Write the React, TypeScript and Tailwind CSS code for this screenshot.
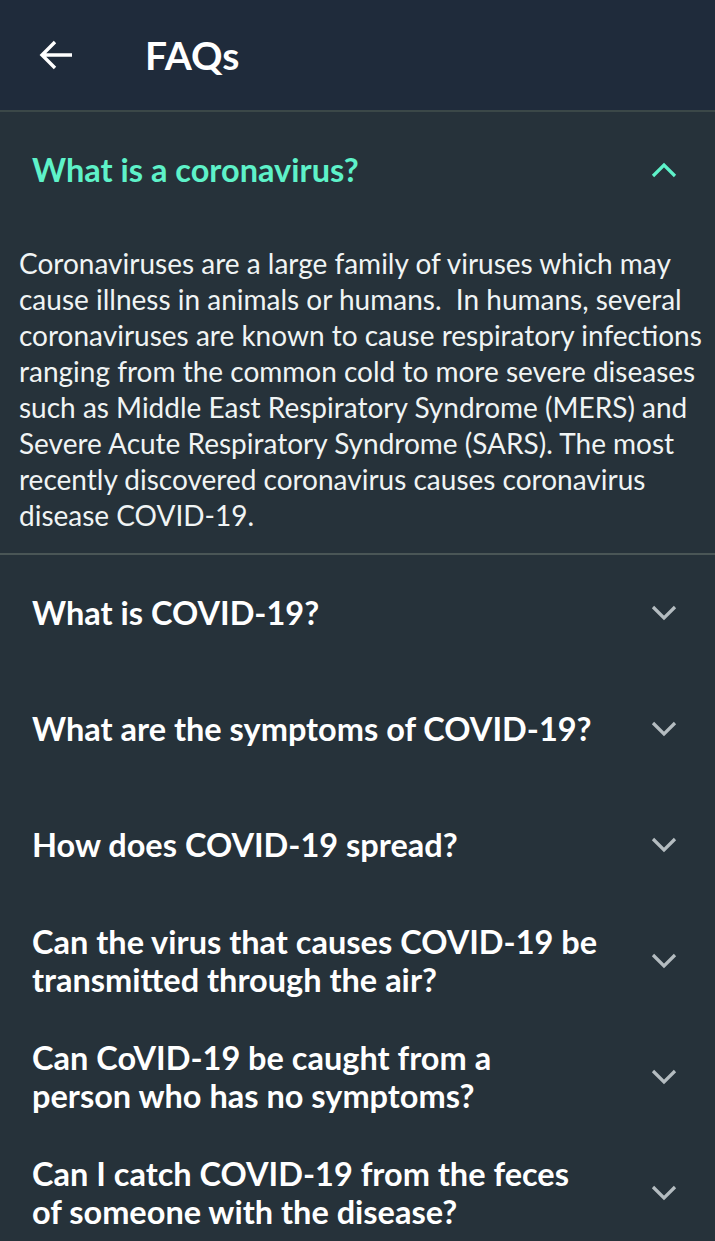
import { Fragment, useState } from "react";

type Faq = {
  question: string[];
  answer?: string[];
};

const faqs: Faq[] = [
  {
    question: ["What is a coronavirus?"],
    answer: [
      "Coronaviruses are a large family of viruses which may",
      "cause illness in animals or humans.\u00a0 In humans, several",
      "coronaviruses are known to cause respiratory infections",
      "ranging from the common cold to more severe diseases",
      "such as Middle East Respiratory Syndrome (MERS) and",
      "Severe Acute Respiratory Syndrome (SARS). The most",
      "recently discovered coronavirus causes coronavirus",
      "disease COVID-19.",
    ],
  },
  { question: ["What is COVID-19?"] },
  { question: ["What are the symptoms of COVID-19?"] },
  { question: ["How does COVID-19 spread?"] },
  { question: ["Can the virus that causes COVID-19 be", "transmitted through the air?"] },
  { question: ["Can CoVID-19 be caught from a", "person who has no symptoms?"] },
  { question: ["Can I catch COVID-19 from the feces", "of someone with the disease?"] },
];

const Chevron = ({ up }: { up: boolean }) => (
  <svg
    width="26"
    height="16"
    viewBox="0 0 26 16"
    fill="none"
    className={`shrink-0 ${up ? "text-[#5ef2c9]" : "text-[#b4bcc0]"}`}
  >
    {up ? (
      <path d="M2 14 L13 3 L24 14" stroke="currentColor" strokeWidth="3.2" />
    ) : (
      <path d="M2 2 L13 13 L24 2" stroke="currentColor" strokeWidth="3.2" />
    )}
  </svg>
);

const Lines = ({ lines }: { lines: string[] }) => (
  <>
    {lines.map((line, i) => (
      <Fragment key={line}>
        {i > 0 && <br />}
        {line}
      </Fragment>
    ))}
  </>
);

const App = () => {
  const [open, setOpen] = useState(0);

  return (
    <div className="min-h-[1241px] bg-[#26323a] font-['Lato',sans-serif]">
      <header className="h-[112px] bg-[#1f2b3b] flex items-center border-b-2 border-[#3b4848]">
        <button className="ml-[38px] mr-[71px] text-white">
          <svg width="36" height="32" viewBox="0 0 36 32" fill="none">
            <path d="M34 16 H4 M17 3 L4 16 L17 29" stroke="currentColor" strokeWidth="3.4" />
          </svg>
        </button>
        <h1 className="text-white text-[39px] font-bold">FAQs</h1>
      </header>

      {faqs.map((faq, i) => {
        const isOpen = open === i;
        return (
          <div key={faq.question[0]} className={isOpen ? "border-b-2 border-[#4a5656]" : ""}>
            <button
              onClick={() => setOpen(isOpen ? -1 : i)}
              className="w-full h-[116px] flex items-center justify-between pl-[32px] pr-[38px] text-left"
            >
              <span
                className={`text-[32.5px] leading-[38px] font-bold whitespace-nowrap ${isOpen ? "text-[#5ef2c9]" : "text-white"}`}
              >
                <Lines lines={faq.question} />
              </span>
              <Chevron up={isOpen} />
            </button>
            {isOpen && faq.answer && (
              <p className="px-[19px] pt-[17px] pb-[20px] text-[28px] leading-[36px] text-[#f0f4f4] whitespace-nowrap">
                <Lines lines={faq.answer} />
              </p>
            )}
          </div>
        );
      })}
    </div>
  );
};

export default App;
